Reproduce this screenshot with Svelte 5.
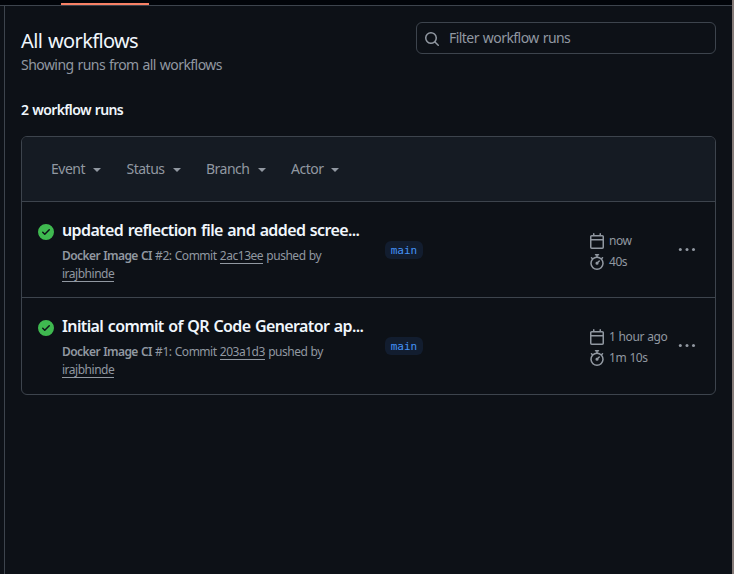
<script>
  const filters = ['Event', 'Status', 'Branch', 'Actor'];
  const runs = [
    { title: 'updated reflection file and added scree...', number: 2, sha: '2ac13ee', when: 'now', took: '40s' },
    { title: 'Initial commit of QR Code Generator ap...', number: 1, sha: '203a1d3', when: '1 hour ago', took: '1m 10s' }
  ];
</script>

<div class="page">
  <div class="tabs"><span class="active-tab"></span></div>
  <div class="body">
    <main>
      <header>
        <div>
          <h1>All workflows</h1>
          <p class="sub">Showing runs from all workflows</p>
        </div>
        <div class="search">
          <svg width="16" height="16" viewBox="0 0 16 16"><path d="M10.68 11.74a6 6 0 0 1-7.922-8.982 6 6 0 0 1 8.982 7.922l3.04 3.04a.749.749 0 0 1-.326 1.275.749.749 0 0 1-.734-.215ZM11.5 7a4.499 4.499 0 1 0-8.997 0A4.499 4.499 0 0 0 11.5 7Z" /></svg>
          <span>Filter workflow runs</span>
        </div>
      </header>
      <h2>2 workflow runs</h2>
      <section class="card">
        <div class="filters">
          {#each filters as label}
            <span class="filter">
              <span>{label}</span>
              <svg width="8" height="4" viewBox="0 0 8 4"><path d="M0 0h8L4 4z" /></svg>
            </span>
          {/each}
        </div>
        {#each runs as run}
          <div class="run">
            <svg class="ok" width="16" height="16" viewBox="0 0 16 16"><path d="M8 16A8 8 0 1 1 8 0a8 8 0 0 1 0 16Zm3.78-9.72a.751.751 0 0 0-.018-1.042.751.751 0 0 0-1.042-.018L6.75 9.19 5.28 7.72a.751.751 0 0 0-1.042.018.751.751 0 0 0-.018 1.042l2 2a.75.75 0 0 0 1.06 0Z" /></svg>
            <div class="info">
              <div class="title">{run.title}</div>
              <div class="meta"><b>Docker Image CI</b> <span>#{run.number}: Commit <u>{run.sha}</u> pushed by</span></div>
              <div class="meta"><u>irajbhinde</u></div>
            </div>
            <div class="branch"><span>main</span></div>
            <div class="times">
              <div>
                <svg width="16" height="16" viewBox="0 0 16 16"><path d="M4.75 0a.75.75 0 0 1 .75.75V2h5V.75a.75.75 0 0 1 1.5 0V2h1.25c.966 0 1.75.784 1.75 1.75v10.5A1.75 1.75 0 0 1 13.25 16H2.75A1.75 1.75 0 0 1 1 14.25V3.75C1 2.784 1.784 2 2.75 2H4V.75A.75.75 0 0 1 4.75 0ZM2.5 7.5v6.75c0 .138.112.25.25.25h10.5a.25.25 0 0 0 .25-.25V7.5Zm10.75-4H2.75a.25.25 0 0 0-.25.25V6h11V3.75a.25.25 0 0 0-.25-.25Z" /></svg>
                <span>{run.when}</span>
              </div>
              <div>
                <svg width="16" height="16" viewBox="0 0 16 16"><path d="M5.75.75A.75.75 0 0 1 6.5 0h3a.75.75 0 0 1 0 1.5h-.75v1l-.001.041a6.724 6.724 0 0 1 3.464 1.435l.007-.006.75-.75a.749.749 0 0 1 1.275.326.749.749 0 0 1-.215.734l-.75.75-.006.007a6.75 6.75 0 1 1-10.548 0L2.72 5.03l-.75-.75a.751.751 0 0 1 .018-1.042.751.751 0 0 1 1.042-.018l.75.75.007.006A6.72 6.72 0 0 1 7.25 2.541V1.5H6.5a.75.75 0 0 1-.75-.75ZM8 14.5a5.25 5.25 0 1 0 0-10.5 5.25 5.25 0 0 0 0 10.5Zm.389-6.7 1.33-1.33a.75.75 0 1 1 1.061 1.06L9.45 8.861A1.503 1.503 0 0 1 8 10.75a1.499 1.499 0 1 1 .389-2.95Z" /></svg>
                <span>{run.took}</span>
              </div>
            </div>
            <svg class="more" width="18" height="4" viewBox="0 0 18 4"><circle cx="2.3" cy="1.5" r="1.5" /><circle cx="9" cy="1.5" r="1.5" /><circle cx="15.5" cy="1.5" r="1.5" /></svg>
          </div>
        {/each}
      </section>
    </main>
  </div>
</div>

<style>
  .page {
    box-sizing: border-box;
    width: 734px;
    height: 574px;
    overflow: hidden;
    display: flex;
    flex-direction: column;
    background: #0d1117;
    border-right: 2px solid #857b78;
    color: #9198a1;
    font: 14px/20px 'Noto Sans', sans-serif;
    letter-spacing: -0.55px;
    word-spacing: 0.8px;
    white-space: nowrap;
  }
  svg { display: block; fill: #9198a1; flex: none; }
  .tabs { height: 5px; flex: none; background: #010409; border-bottom: 1px solid #3d444d; }
  .active-tab { display: block; width: 88px; height: 2px; margin-left: 61px; position: relative; top: 3px; background: #f78166; }
  .body { flex: 1; margin-left: 4px; border-left: 1px solid #3d444d; }
  main { padding: 16px 16px 0; width: 695px; }
  header { display: flex; justify-content: space-between; height: 70px; }
  h1 { margin: 4px 0 0; font-size: 20px; line-height: 30px; font-weight: 400; color: #f0f6fc; letter-spacing: -0.65px; word-spacing: 1.3px; }
  .sub { margin: -1px 0 0; }
  .search { box-sizing: border-box; width: 300px; height: 32px; border: 1px solid #3d444d; border-radius: 6px; display: flex; align-items: center; gap: 9px; padding-left: 7px; }
  .search svg { margin-top: 2px; }
  h2 { margin: 8px 0 16px; font-size: 14px; line-height: 20px; font-weight: 600; color: #f0f6fc; letter-spacing: -0.65px; word-spacing: 1px; }
  .card { border: 1px solid #3d444d; border-radius: 6px; overflow: hidden; }
  .filters { display: flex; gap: 25.5px; height: 64px; align-items: center; background: #151b23; padding-left: 29px; border-bottom: 1px solid #3d444d; letter-spacing: -0.5px; }
  .filter { display: flex; align-items: center; gap: 8px; }
  .filter svg { margin-top: 1px; }
  .run { box-sizing: border-box; display: flex; height: 95px; }
  .run + .run { border-top: 1px solid #3d444d; height: 97px; }
  .ok { fill: #3fb950; margin: 22px 8px 0 16px; }
  .info { width: 323px; padding-top: 16px; }
  .title { font-size: 16px; line-height: 25px; font-weight: 600; color: #f0f6fc; letter-spacing: -0.62px; word-spacing: 1px; }
  .meta { font-size: 12px; line-height: 18px; letter-spacing: -0.48px; word-spacing: 0.6px; }
  .title + .meta { margin-top: 4px; }
  .meta b { font-weight: 600; letter-spacing: -0.58px; }
  u { text-decoration: none; display: inline-block; line-height: 14px; border-bottom: 1px solid #9198a1; }
  .branch { width: 204px; padding-top: 39px; }
  .branch span { display: block; width: 38px; height: 18px; line-height: 19px; border-radius: 6px; background: #121d2f; color: #4493f8; text-align: center; font-family: 'DejaVu Sans Mono', monospace; font-size: 11px; letter-spacing: 0; }
  .times { width: 89px; padding-top: 28px; font-size: 12px; letter-spacing: -0.43px; word-spacing: 0.5px; }
  .times div { display: flex; gap: 4px; align-items: center; height: 22px; }
  .times div + div { height: 20px; }
  .more { margin-top: 46px; }
</style>
